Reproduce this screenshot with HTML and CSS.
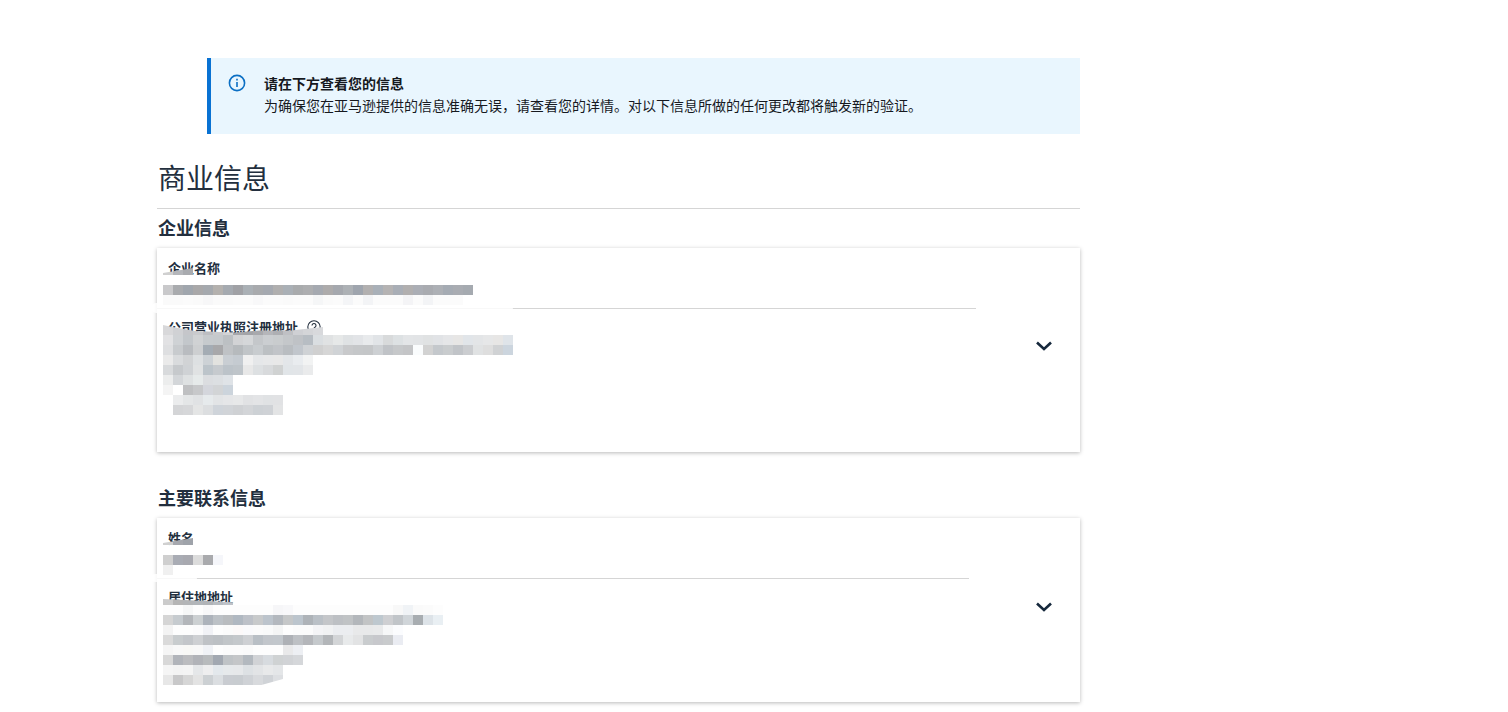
FILE: index.html
```html
<!DOCTYPE html>
<html lang="zh-CN">
<head>
<meta charset="utf-8">
<title>商业信息</title>
<link rel="stylesheet" href="styles.css">
</head>
<body>
<main class="page">
  <section class="alert">
    <svg class="alert-icon" width="18" height="18" viewBox="0 0 18 18" fill="none" stroke="#0b6fc4" stroke-width="1.6"><circle cx="9" cy="9" r="7.6"/><path d="M9 8v5" /><path d="M9 4.8v1.6"/></svg>
    <div>
      <div class="alert-title">请在下方查看您的信息</div>
      <div class="alert-body">为确保您在亚马逊提供的信息准确无误，请查看您的详情。对以下信息所做的任何更改都将触发新的验证。</div>
    </div>
  </section>
  <h1 class="title">商业信息</h1>
  <h2 class="subtitle">企业信息</h2>
  <section class="card card-business">
    <div class="fields">
      <div class="field field-name">
        <div class="label">企业名称</div>
      </div>
      <div class="field">
        <div class="label">公司营业执照注册地址
          <svg class="help" width="14" height="14" viewBox="0 0 14 14" fill="none" stroke="#232f3e" stroke-width="1.1"><circle cx="7" cy="7" r="6.2"/><path d="M5 5.4a2 2 0 1 1 3 1.8c-.7.4-1 .8-1 1.5"/><path d="M7 9.9v1"/></svg>
        </div>
      </div>
    </div>
    <svg class="chevron" width="18" height="12" viewBox="0 0 18 12" fill="none" stroke="#16283c" stroke-width="2.6"><path d="M2 2.5l7 6.5 7-6.5"/></svg>
    <div class="smudge smudge-a"></div>
    <div class="mosaic" data-x="6" data-y="20" data-rows='[[0,7,"d0d0d0 b4b6ba a9abaf","cut-up"]]'></div>
    <div class="mosaic" data-x="6" data-y="37" data-rows='[[0,10,"c9c9cb a9abae a0a6ad a9a8a9 a5a9ae b4b1ae a5aab0 a0a1a5 aab0b5 a8aaad a5a9b0 b0afaf aab0b6 a9abad adaeb0 a5a9b0 adabab a5a8ae adb1b5 9fa5ae b2b0b0 a9b0b8 b5b3b3 a9aeb6 b1afaf abaeb5 a9abb0 adb0b5 a5abb3 a9acb2 a5aab0"],[0,10,"fafafa fafafa fbfbfb fafafa f7f7f8 fafafa fafafa fbfbfb fbfbfb f8f8f9 fbfbfb fbfbfb fafafa fbfbfb fbfbfb f5f6f7 fafafa fbfbfb f4f5f7 fbfbfb f3f4f6 fbfbfb fbfbfb fbfbfb f4f4f6 fbfbfb f3f4f6 fbfbfb fbfbfb fbfbfb"]]'></div>
    <div class="mosaic" data-x="6" data-y="77" data-rows='[[0,10,"d8d8da d0d1d4 c5c6ca c9cacd bdbec2 c9cacc d2d3d5 a6a7ab a3a4a8 a8a9ad b5b6ba aeafb3 bfc0c4 cfd0d4 d4d5d8 d8d9dc","cut-wave"],[0,10,"e2e2e4 cfd2d5 c3c7cb d0d2d4 c6cacd c5c9cc bcc0c3 d2d3d5 d5d7d9 c4c7ca cbced1 c9ccce c4c7ca bfc2c6 b7bdc3 dadee1 e0e2e3 e6e8e8 dfe2e4 e2e4e7 e8eaec e1e4e7 d8dadb dde1e3 e3e5e7 e2e4e6 e0e2e3 e1e3e6 e5e6e8 e7e6e5 e1e5e9 e3e5e7 e6e7e8 e7e6e5 dfe4e9"],[0,10,"dedfe1 c8cbce b9bcc0 cdcfd1 a4acb4 a8a8aa bfc2c5 b6babd c1c5c8 c8cccf bcc0c3 c1c4c8 b9bdc1 c1c6cc cfd2d5 d0d0d0 d6d6d6 d0d3d6 c8c9cb c5c7c9 c4c6c8 cdd0d3 c0c3c7 c6c8ca c4c5c7 fafcfd d2d2d2 c4c8cc c9ccce c1c4c8 cbcdd0 e0e2e3 dedede d0d2d4 ccd5de"],[0,10,"eaeaea d9dbdd d1d3d5 dde0e2 cdd2d6 e2e2df c9ced3 c5cbd1 f0f0f0 e5e7e9 e7e8e9 e8e8e8 e3e6e9 e9ecef f2f3f3"],[0,10,"d8dadc c6c9cc cfd2d5 e0e2e3 bcc4ca c6cace bcc3c9 bfc5ca e8e8e8 dde0e2 d8dadc d0d2d2 e1e5e8 e2e5e8 eaebec"],[0,10,"eceded d3d6d9 dee1e2 e6eaea dbdde0 dcdfe2 dfe3e7"],[0,10,"f4f4f4 ffffff bfc0c2 c7c8ca d4d6dc d2d4d6 ccd4dc"],[10,10,"ebeced e4e6e7 e0e2e4 e6eaec e2e4e6 e5e6e8 e7e8e9 e1e2e4 e3e4e6 e0e2e4 e1e2e4"],[10,10,"d4d5d7 d6d7d9 e4e5e5 dcdee0 cfd4da d1d4d8 cfd1d4 d3d5d8 cdd1d5 cfd2d6 e3e4e5"]]'></div>
  </section>
  <h2 class="subtitle subtitle-next">主要联系信息</h2>
  <section class="card card-contact">
    <div class="fields">
      <div class="field field-name">
        <div class="label">姓名</div>
      </div>
      <div class="field">
        <div class="label">居住地地址</div>
      </div>
    </div>
    <svg class="chevron" width="18" height="12" viewBox="0 0 18 12" fill="none" stroke="#16283c" stroke-width="2.6"><path d="M2 2.5l7 6.5 7-6.5"/></svg>
    <div class="smudge smudge-b"></div>
    <div class="mosaic" data-x="6" data-y="20" data-rows='[[0,7,"d0d0d0 a6a8ae 9fa3aa","cut-up"]]'></div>
    <div class="mosaic" data-x="6" data-y="37" data-rows='[[0,10,"cfcfcf a9acb4 a8a9b0 dcdcdc a9aaad f5f6fa"],[0,10,"f0f0f0"]]'></div>
    <div class="mosaic" data-x="6" data-y="80" data-rows='[[0,7,"cbcbcb b5b5b5 b3b5b7 b2b6ba b0b3b7 b7bcc1 bec2c8","cut-down"]]'></div>
    <div class="mosaic" data-x="6" data-y="87" data-rows='[[0,10,"fdfdfd fdfdfd f6f7f7 fdfdfd f8f8f9 fdfdfd fdfdfd fdfdfd fdfdfd fdfdfd fdfdfd f6f6f8 f8f8fa fdfdfd fdfdfd fdfdfd fdfdfd fdfdfd fdfdfd fdfdfd fdfdfd fdfdfd fdfdfd f8f8f8 f0f3f6 fafafa fbfbfb fdfdfd"],[0,10,"d5d5d5 c6cbcf b3b6ba ccd0d2 adb3bb bcc1c6 b9bcbf b0b8c1 bdc1c8 c8cacb bcc4cc b3b8be c5c7c8 bcc5cd aeb3b8 bac0c6 c4c6c9 bdc0c4 c0c3c5 b3b7bb c2c4c5 bec8cf cecfd2 c1c5c9 d0d5d9 a8adb1 dde3e8 e9eff3"],[0,10,"f3f3f3 fdfdfd fdfdfd fbfbfc f1f2f6 fdfdfd fbfbfb fcf9f9 fafafc fbfbfb f9fafa f4f5f5 fdfdfd fbfbfb fbfbfb f4f4f6 f1f2f3 ebedf0 ebedf0 e8e9ea e8e9ea e9eaeb f6f7f8 fbfcfe"],[0,10,"dadada c8ccce c3c6ca ced0d3 bfc2c6 bcc0c4 c1c5c8 c4c8cb ced0d3 b9bfc5 c2c6cb c2c7cc aeb1b6 bdc0c4 b4b6ba c5c9cc b3b6b9 d3d5d7 e8eaeb e2e3e4 c9ccce c7c8cc c9cbcd eaecf2"],[0,10,"f5f5f5 f8f8f8 f8f8f6 f8f8f8 f0f2f6 fdfdfd fbfbfb fbfbfb fafafa fdfdfd fdfdfd fdfdfd e9e9ea edeff3"],[0,10,"d8d8d8 b1b4ba bbbcbf b1b3b8 b8bbbd a2a8b1 bfc3c6 c4c6c8 b3b9bf d1d3d6 d7dbdf cfd2d3 d1d3d6 d5d7da"],[0,10,"f5f5f5 f3f3f3 f4f4f4 e5e7e9 eeeeef e3e8ec e6e9eb e6e8ea dde1e4 e2e4e6 e8e9ea e4e6e8"],[0,10,"e7e7e7 c8c8c9 d6d6d6 e3e3e3 ccd0d3 dbdee1 c9ccd1 c8ccd0 cfd2d6 d8dadd d0d3d7 dddfe2","cut-tail"]]'></div>
  </section>
</main>
<script src="mosaic.js"></script>
</body>
</html>
```
FILE: styles.css
```css
* { box-sizing: border-box; }
html, body { margin: 0; background: #fff; }
body {
  height: 712px;
  overflow: hidden;
  color: #16191f;
  font-family: "Noto Sans CJK SC", "Liberation Sans", sans-serif;
}
.page { width: 923px; margin-left: 157px; padding-top: 58px; }
.alert {
  display: flex;
  gap: 18px;
  height: 76px;
  margin-left: 50px;
  padding: 15px 17px;
  background: #e9f6fe;
  border-left: 4px solid #0972d3;
  font-size: 14px;
  line-height: 22px;
  color: #16191f;
}
.alert-icon { flex: none; margin-top: 1px; }
.alert-title { font-weight: 700; line-height: 21px; }
.title {
  margin: 23px 0 0;
  height: 52px;
  padding-left: 1px;
  border-bottom: 1px solid #d5d5d5;
  font-size: 28px;
  font-weight: 400;
  line-height: 40px;
  color: #232f3e;
}
.subtitle {
  margin: 0;
  height: 39px;
  padding: 7px 0 0 1px;
  font-size: 18px;
  font-weight: 700;
  line-height: 22px;
  color: #232f3e;
}
.subtitle-next { margin-top: 27px; }
.card {
  position: relative;
  display: flex;
  align-items: flex-start;
  background: #fff;
  box-shadow: 0 1px 4px rgba(0, 0, 0, .28);
}
.card-business { height: 204px; }
.card-contact { height: 184px; }
.fields { flex: 1; padding-top: 12px; }
.card-business .fields { padding-right: 59px; }
.card-contact .fields { padding-right: 66px; }
.field { padding-left: 11px; }
.field-name { height: 49px; border-bottom: 1px solid #d5d5d5; margin-bottom: 10px; }
.label {
  display: flex;
  align-items: center;
  gap: 9px;
  font-size: 13px;
  font-weight: 700;
  line-height: 16px;
  color: #232f3e;
}
.help { flex: none; font-weight: 400; }
.chevron { flex: none; margin-right: 27px; margin-top: 92px; }
.card-contact .chevron { margin-top: 83px; }
.mosaic { position: absolute; left: 0; top: 0; }
.mosaic-row { display: flex; width: max-content; }
.mosaic-cell { display: block; flex: none; width: 10px; }
.cut-up { clip-path: polygon(0 70%, 100% 0, 100% 100%, 0 100%); }
.cut-down { clip-path: polygon(0 15%, 100% 60%, 100% 100%, 0 100%); }
.cut-wave { clip-path: polygon(0 0, 6% 20%, 20% 60%, 45% 75%, 60% 55%, 80% 55%, 100% 20%, 100% 100%, 0 100%); }
.cut-tail { clip-path: polygon(0 0, 100% 0, 100% 40%, 82% 100%, 0 100%); }
.smudge { position: absolute; left: -6px; background: rgba(255, 255, 255, .82); border-radius: 6px; }
.smudge-a { top: 55px; width: 362px; height: 10px; }
.smudge-b { top: 56px; width: 46px; height: 8px; }
```
FILE: mosaic.js
```js
document.querySelectorAll('.mosaic').forEach(function (box) {
  box.style.left = box.dataset.x + 'px';
  box.style.top = box.dataset.y + 'px';
  JSON.parse(box.dataset.rows).forEach(function (row) {
    var line = document.createElement('div');
    line.className = 'mosaic-row' + (row[3] ? ' ' + row[3] : '');
    line.style.marginLeft = row[0] + 'px';
    line.style.height = row[1] + 'px';
    row[2].split(' ').filter(Boolean).forEach(function (grey) {
      var cell = document.createElement('span');
      cell.className = 'mosaic-cell';
      cell.style.background = '#' + grey;
      line.appendChild(cell);
    });
    box.appendChild(line);
  });
});
```
